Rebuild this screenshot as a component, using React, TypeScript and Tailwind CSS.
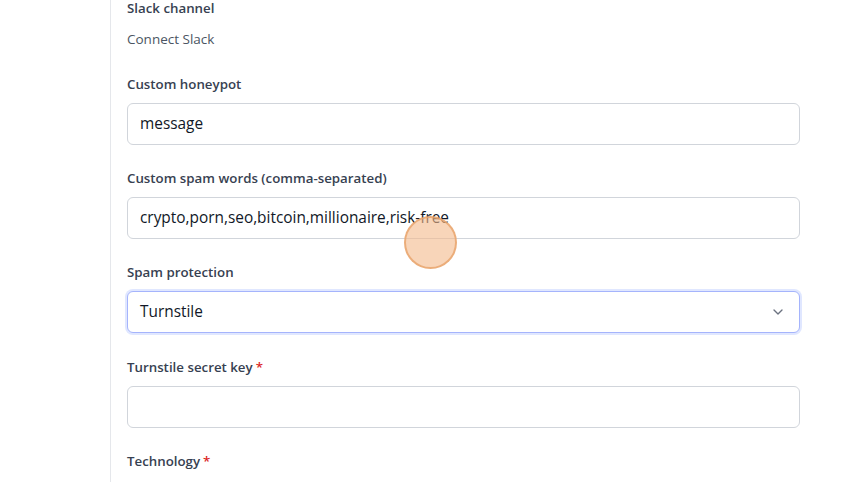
import React from "react";
import { ChevronDown } from "lucide-react";

function Field({
  label,
  required,
  children,
}: {
  label: string;
  required?: boolean;
  children: React.ReactNode;
}) {
  return (
    <div className="flex flex-col">
      <label className="text-[13.3px] leading-5 font-semibold text-[#374151] mb-[9px]">
        {label}
        {required && <span className="text-[#dc2626] ml-[3px]">*</span>}
      </label>
      {children}
    </div>
  );
}

function TextInput({ value }: { value: string }) {
  return (
    <div className="h-[42px] w-full rounded-md border border-[#d1d5db] bg-white px-3 flex items-center text-[15.4px] text-[#111827]">
      {value}
    </div>
  );
}

export default function App() {
  return (
    <div
      className="relative w-[860px] h-[482px] overflow-hidden bg-white flex"
      style={{ fontFamily: '"Open Sans", "Noto Sans", sans-serif' }}
    >
      {/* Sidebar */}
      <div className="w-[111px] shrink-0 border-r border-[#e5e7eb]" />

      {/* Form */}
      <div className="flex-1 pl-4 pr-[60px] mt-[-2px] flex flex-col gap-[23px]">
        <div className="flex flex-col">
          <span className="text-[13.3px] leading-5 font-semibold text-[#374151]">Slack channel</span>
          <span className="text-[13.5px] leading-5 text-[#4b5563] mt-[11px] mb-[2px]">Connect Slack</span>
        </div>

        <Field label="Custom honeypot">
          <TextInput value="message" />
        </Field>

        <Field label="Custom spam words (comma-separated)">
          <TextInput value="crypto,porn,seo,bitcoin,millionaire,risk-free" />
        </Field>

        <Field label="Spam protection">
          <div className="h-[42px] w-full rounded-md border border-[#a5b4fc] ring-2 ring-[#e0e7ff] bg-white pl-3 pr-[13px] flex items-center justify-between text-[15.4px] text-[#111827]">
            <span>Turnstile</span>
            <ChevronDown className="w-4 h-4 text-[#6b7280]" strokeWidth={2} />
          </div>
        </Field>

        <div className="mt-px">
          <Field label="Turnstile secret key" required>
            <TextInput value="" />
          </Field>
        </div>

        <Field label="Technology" required>
          <div />
        </Field>
      </div>

      {/* click indicator */}
      <div className="absolute left-[404px] top-[216px] w-[53px] h-[53px] rounded-full bg-[#f4b98a]/60 border-2 border-[#e8a46c]/80" />
    </div>
  );
}
